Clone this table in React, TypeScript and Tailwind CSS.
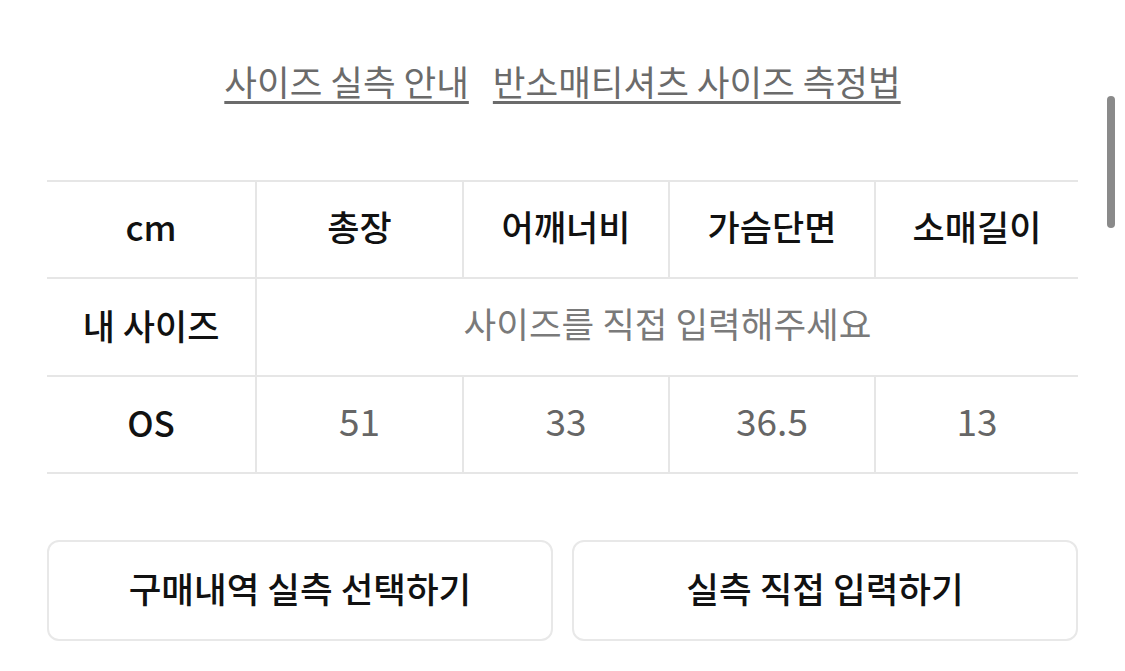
import React from "react";

const font = { fontFamily: '"Noto Sans CJK KR", "Noto Sans", sans-serif' };

export default function App() {
  const headers = ["cm", "총장", "어깨너비", "가슴단면", "소매길이"];
  const values = ["51", "33", "36.5", "13"];
  return (
    <div className="relative w-[1125px] h-[671px] bg-white overflow-hidden" style={font}>
      <div className="flex justify-center gap-[24px] pt-[57px] text-[35.5px] leading-[48px] text-[#6b6b6b]">
        <span className="underline decoration-[3px] underline-offset-[5px] decoration-[#6b6b6b]">사이즈 실측 안내</span>
        <span className="underline decoration-[3px] underline-offset-[5px] decoration-[#6b6b6b]">반소매티셔츠 사이즈 측정법</span>
      </div>

      <div className="ml-[47px] mt-[75px] w-[1031px] grid grid-cols-[208px_207px_206px_206px_204px] border-t-2 border-[#e6e6e6]">
        {headers.map((h, i) => (
          <div
            key={h}
            className={`h-[97px] pb-[8px] flex items-center justify-center border-b-2 border-[#e6e6e6] text-[35px] leading-none font-medium text-[#111] ${i > 0 ? "border-l-2" : ""}`}
          >
            {h}
          </div>
        ))}
        <div className="h-[98px] pb-[6px] flex items-center justify-center border-b-2 border-[#e6e6e6] text-[35px] leading-none font-medium text-[#111]">
          내 사이즈
        </div>
        <div className="col-span-4 h-[98px] pb-[8px] flex items-center justify-center border-b-2 border-l-2 border-[#e6e6e6] text-[35.5px] leading-none text-[#7a7a7a]">
          사이즈를 직접 입력해주세요
        </div>
        <div className="h-[97px] pb-[6px] flex items-center justify-center border-b-2 border-[#e6e6e6] text-[35px] leading-none font-medium text-[#111]">
          OS
        </div>
        {values.map((v) => (
          <div
            key={v}
            className="h-[97px] pb-[9px] flex items-center justify-center border-b-2 border-l-2 border-[#e6e6e6] text-[37px] leading-none text-[#666]"
          >
            {v}
          </div>
        ))}
      </div>

      <div className="ml-[47px] mt-[66px] w-[1031px] flex gap-[19px]">
        <button className="flex-1 h-[101px] pb-[6px] rounded-[12px] border-2 border-[#e8e8e8] bg-white text-[35.5px] leading-none font-medium text-[#111] flex items-center justify-center">
          구매내역 실측 선택하기
        </button>
        <button className="flex-1 h-[101px] pb-[6px] rounded-[12px] border-2 border-[#e8e8e8] bg-white text-[35.5px] leading-none font-medium text-[#111] flex items-center justify-center">
          실측 직접 입력하기
        </button>
      </div>

      <div className="absolute left-[1107px] top-[96px] w-[8px] h-[132px] rounded-full bg-[#8a8a8a]" />
    </div>
  );
}
